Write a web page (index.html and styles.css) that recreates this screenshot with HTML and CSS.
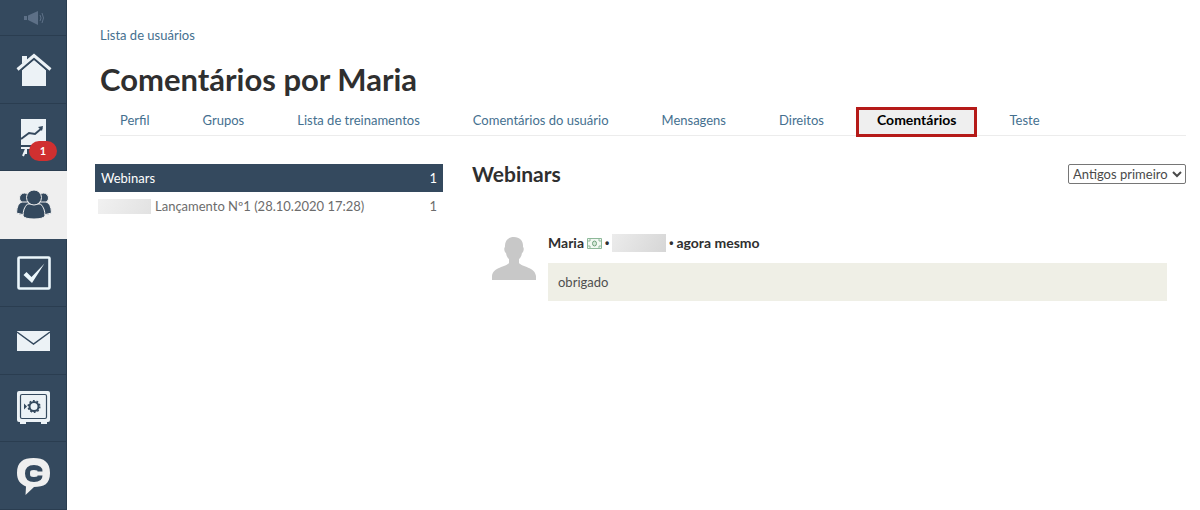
FILE: index.html
```html
<!DOCTYPE html>
<html lang="pt">
<head>
<meta charset="utf-8">
<meta name="viewport" content="width=device-width, initial-scale=1">
<title>Comentários por Maria</title>
<link rel="stylesheet" href="styles.css">
</head>
<body>
<div class="app">
  <nav class="sidebar" aria-label="Menu principal">
    <a class="side-item side-item-small" href="#" aria-label="Avisos">
      <svg width="22" height="16" viewBox="0 0 22 16" fill="#5d7087"><path d="M1 6h3v4H1zM5 5.500 15 1v14L5 10z"/><path d="M17 5q2 3 0 6M19 3q3 5 0 10" fill="none" stroke="#5d7087"/></svg>
    </a>
    <a class="side-item" href="#" aria-label="Início">
      <svg width="36" height="36" viewBox="0 0 36 36" fill="#ecf2f6"><path d="M6 4h5v4l-5 4zM18 8l12 10v16H6V18z"/><path d="M1 20 18 5l17 15" fill="none" stroke="#34495e" stroke-width="4"/><path d="M1.500 17.500 18 3.500l16.500 14" fill="none" stroke="#ecf2f6" stroke-width="3"/></svg>
    </a>
    <a class="side-item" href="#" aria-label="Treinamentos">
      <svg width="36" height="40" viewBox="0 0 36 40"><path d="M5 1h25v26H5zM5 29h25v2H5z" fill="#ecf2f6"/><path d="m10 31-3 7m3-7v5" fill="none" stroke="#ecf2f6" stroke-width="2"/><path d="m5 21 8-6 6 1 7-6" fill="none" stroke="#34495e" stroke-width="2"/><path d="m22 9 5-1-1 5z" fill="#34495e"/></svg>
      <span class="badge">1</span>
    </a>
    <a class="side-item side-item-active" href="#" aria-label="Usuários" aria-current="page">
      <svg width="36" height="34" viewBox="0 0 36 34" fill="#34495e" stroke="#efefef" stroke-width="1"><circle cx="8.500" cy="10" r="5"/><circle cx="27.500" cy="10" r="5"/><path d="M.5 25Q1 15 6 14h7v11q-7 3-12.500 0zM35.500 25Q35 15 30 14h-7v11q7 3 12.500 0z"/><path d="M7 28q0-8 4.500-12h13Q29 20 29 28q-2 3-11 3T7 28z"/><circle cx="18" cy="9.500" r="7.500"/></svg>
    </a>
    <a class="side-item" href="#" aria-label="Tarefas">
      <svg width="36" height="36" viewBox="0 0 36 36"><rect x="2.500" y="2.500" width="31" height="31" rx="1" fill="none" stroke="#ecf7fc" stroke-width="2.600"/><path d="m7.500 20 3-3 5 5L28.500 8.500 16 28z" fill="#ecf7fc"/></svg>
    </a>
    <a class="side-item" href="#" aria-label="Mensagens">
      <svg width="36" height="24" viewBox="0 0 36 24"><path d="M1 2h33v20H1z" fill="#ecf2f6"/><path d="m1 3 16.500 12L34 3" fill="none" stroke="#34495e" stroke-width="1.500"/></svg>
    </a>
    <a class="side-item" href="#" aria-label="Pagamentos">
      <svg width="36" height="36" viewBox="0 0 36 36"><path d="M3 1h29q2 0 2 2v27q0 2-2 2h-1v2h-6v-2H10v2H4v-2H3q-2 0-2-2V3q0-2 2-2z" fill="#ecf2f6"/><rect x="4.500" y="4.500" width="26" height="24" rx="1.500" fill="none" stroke="#34495e" stroke-width="1.200"/><circle cx="18" cy="16.500" r="4.500" fill="none" stroke="#34495e" stroke-width="2"/><circle cx="18" cy="16.500" r="5.800" fill="none" stroke="#34495e" stroke-width="1.500" stroke-dasharray="1.800 1.850"/><path d="m8 13.500 3 3-3 3z" fill="#34495e"/></svg>
    </a>
    <a class="side-item" href="#" aria-label="Chat">
      <svg width="36" height="40" viewBox="0 0 36 40"><path d="M17.500 2C28 2 34 6 34 17S28 31 18 31l-8.500 8 .5-8.500C4 28 1 24 1 17 1 6 7 2 17.500 2z" fill="#efefef"/><path d="M24 15.500c0-3-2-4-6-4-5 0-6.500 1.500-6.500 6s1.500 6 6.500 6c4 0 6-1 6-4" fill="none" stroke="#34495e" stroke-width="5"/></svg>
    </a>
  </nav>

  <main class="page">
    <a class="breadcrumb" href="#">Lista de usuários</a>
    <h1 class="title">Comentários por Maria</h1>
    <nav class="tabs" aria-label="Seções do usuário">
      <a class="tab" href="#">Perfil</a>
      <a class="tab" href="#">Grupos</a>
      <a class="tab" href="#">Lista de treinamentos</a>
      <a class="tab" href="#">Comentários do usuário</a>
      <a class="tab" href="#">Mensagens</a>
      <a class="tab" href="#">Direitos</a>
      <a class="tab tab-active" href="#" aria-current="page">Comentários</a>
      <a class="tab" href="#">Teste</a>
    </nav>

    <div class="columns">
      <div class="sources">
        <a class="source source-active" href="#"><span>Webinars</span><span>1</span></a>
        <a class="source" href="#"><span class="source-name"><span class="redacted"></span>Lançamento Nº1 (28.10.2020 17:28)</span><span>1</span></a>
      </div>
      <section class="comments">
        <header class="comments-head">
          <h2 class="subtitle">Webinars</h2>
          <select class="sort" aria-label="Ordenação"><option>Antigos primeiro</option></select>
        </header>
        <article class="comment">
          <svg class="avatar" width="44" height="43" viewBox="0 0 44 43" fill="#c8c8c8"><path d="M22 0c6 0 9.500 4 9 10 1.500 1 .5 5-1 6-.5 3-1.500 5-3 6v4c3 4 16 4 17 13v4H0v-4c1-9 14-9 17-13v-4c-1.500-1-2.500-3-3-6-1.500-1-2.500-5-1-6-.5-6 3-10 9-10z"/></svg>
          <div class="comment-body">
            <div class="meta">
              <span>Maria</span>
              <svg width="15" height="11" viewBox="0 0 15 11"><path d="M.5.5h14v10H.5z" fill="#f2f8f2" stroke="#8db899"/><path d="M2 4V2h2m7 0h2v2m0 3v2h-2M4 9H2V7" fill="none" stroke="#8db899"/><ellipse cx="7.500" cy="5.500" rx="2" ry="2.500" fill="#d5e8d8" stroke="#70a27d"/></svg>
              <span class="dot">•</span><span class="redacted redacted-tall"></span><span class="dot">•</span>
              <span>agora mesmo</span>
            </div>
            <p class="message">obrigado</p>
          </div>
        </article>
      </section>
    </div>
  </main>
</div>
</body>
</html>
```
FILE: styles.css
```css
* { box-sizing: border-box; }
body { margin: 0; background: #fff; color: #2f2f2f; font: 13px/20px Lato, "Liberation Sans", sans-serif; }
a { color: #45708f; text-decoration: none; }
h1, h2, p { margin: 0; }
.app { display: flex; min-height: 100vh; }

.sidebar { position: sticky; top: 0; display: flex; flex-direction: column; flex: none; width: 67px; height: 100vh; background: #34495e; }
.side-item { position: relative; display: flex; flex: 0 1 68px; min-height: 0; align-items: center; justify-content: center; box-shadow: inset -1px -1px #2a3d50; }
.side-item-small { flex: 0 0 36px; }
.side-item-active { background: #efefef; box-shadow: none; }
.badge { position: absolute; left: 29px; top: 37px; width: 28px; height: 20px; border-radius: 10px; background: #d03030; color: #fff; font-size: 11px; font-weight: 700; text-align: center; }

.page { flex: 1; min-width: 0; padding: 25px 14px 24px 33px; }
.breadcrumb { display: block; }
.title { margin-top: 16px; font-size: 31px; line-height: 36px; font-weight: 700; }
.tabs { display: flex; gap: 13px; margin-top: 11px; border-bottom: 1px solid #ececec; }
.tab { padding: 2px 20px 5px; white-space: nowrap; }
.tab-active { margin-bottom: -1px; padding-bottom: 6px; background: #efefef; color: #000; font-size: 14px; font-weight: 700; outline: 3px solid #b51a18; outline-offset: -2px; }

.columns { display: grid; grid-template-columns: 348px 1fr; gap: 29px; margin: 28px 0 0 -5px; }
.source { display: flex; justify-content: space-between; padding: 5px 6px 5px 3px; line-height: 18px; color: #6c6c6c; }
.source-active { padding-left: 6px; background: #34495e; color: #fff; }
.source-name { display: flex; align-items: center; gap: 4px; }
.redacted { width: 53px; height: 15px; background: linear-gradient(120deg, #f1f1f1, #e2e2e2); }
.redacted-tall { width: 54px; height: 18px; background: linear-gradient(120deg, #ececec, #d6d6d6); }
.comments-head { display: flex; justify-content: space-between; align-items: center; height: 20px; }
.subtitle { font-size: 21px; line-height: 24px; }
.sort { width: 118px; height: 20px; padding: 0; border: 1px solid #767676; border-radius: 2px; background: #fff; color: #4a4a4a; font: inherit; }
.comment { display: flex; gap: 12px; margin: 49px 19px 0 20px; }
.avatar { flex: none; margin-top: 4px; }
.comment-body { flex: 1; min-width: 0; }
.meta { display: flex; align-items: center; gap: 3px; font-size: 14px; font-weight: 700; }
.dot { font-family: "Liberation Sans", sans-serif; font-size: 12px; }
.message { margin-top: 10px; padding: 9px 10px; background: #efefe6; color: #4f4f4f; }
```
